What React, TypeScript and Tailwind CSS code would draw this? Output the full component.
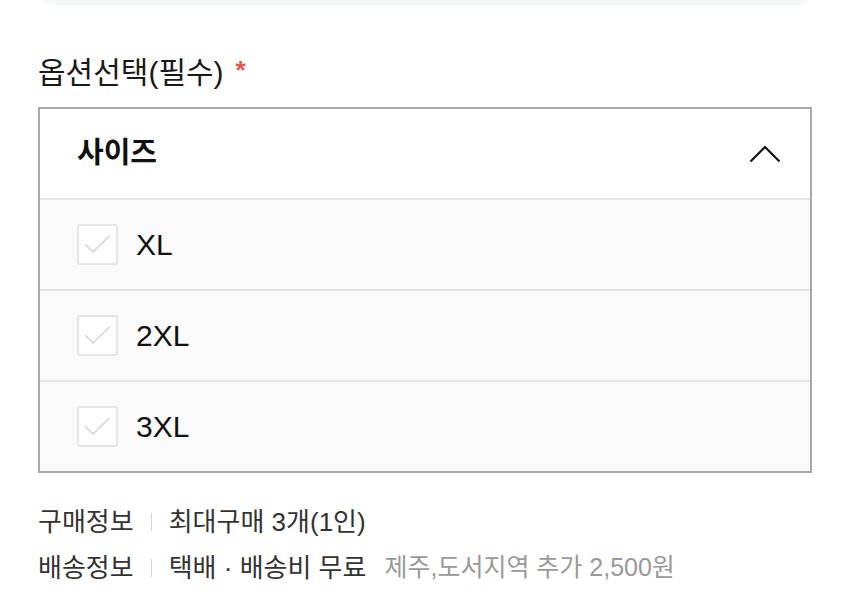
import React from "react";

const font = { fontFamily: '"Liberation Sans", "Noto Sans CJK KR", sans-serif' };

function Check() {
  return (
    <div className="w-[41px] h-[41px] rounded-[3px] border-2 border-[#e6e6e6] bg-white shrink-0">
      <svg width="37" height="37" viewBox="0 0 37 37" fill="none">
        <path d="M6.5 18.5 L14 26 L30 10.5" stroke="#d6d6d6" strokeWidth="1.7" strokeLinecap="round" strokeLinejoin="round" />
      </svg>
    </div>
  );
}

function Row({ label }: { label: string }) {
  return (
    <div className="h-[91px] border-t-2 border-[#e4e4e4] bg-[#fafafa] flex items-center pl-[37px]">
      <Check />
      <span className="ml-[18px] text-[30px] text-[#111]">{label}</span>
    </div>
  );
}

export default function App() {
  const sizes = ["XL", "2XL", "3XL"];
  return (
    <div className="w-[850px] h-[608px] bg-white overflow-hidden" style={font}>
      <div className="mx-[38px] h-[40px] mt-[-35px] rounded-[14px] bg-[#f6f7fb]" />
      <div className="mx-[38px] mt-[47px] h-[40px] flex items-center text-[30px] text-[#1a1a1a]">
        <span>옵션선택(필수)</span>
        <span className="ml-[12px] text-[26px] font-bold text-[#e0574b] mt-[-3px]">*</span>
      </div>
      <div className="mx-[38px] mt-[15px] border-2 border-[#a9a9a9]">
        <div className="h-[89px] flex items-center justify-between pl-[37px] pr-[29px]">
          <span className="text-[29px] font-bold text-[#111]">사이즈</span>
          <svg width="32" height="18" viewBox="0 0 32 18" fill="none">
            <path d="M1.5 16.5 L16 2 L30.5 16.5" stroke="#111" strokeWidth="2.2" />
          </svg>
        </div>
        {sizes.map((s) => (
          <Row key={s} label={s} />
        ))}
      </div>
      <div className="mx-[38px] mt-[26px] flex flex-col text-[26px] text-[#333]">
        <div className="h-[46px] flex items-center">
          <span>구매정보</span>
          <span className="mx-[17px] w-px h-[18px] bg-[#d6d6d6]" />
          <span>최대구매 3개(1인)</span>
        </div>
        <div className="h-[46px] flex items-center">
          <span>배송정보</span>
          <span className="mx-[17px] w-px h-[18px] bg-[#d6d6d6]" />
          <span>택배 · 배송비 무료</span>
          <span className="ml-[18px] text-[25px] text-[#999]">제주,도서지역 추가 2,500원</span>
        </div>
      </div>
    </div>
  );
}
